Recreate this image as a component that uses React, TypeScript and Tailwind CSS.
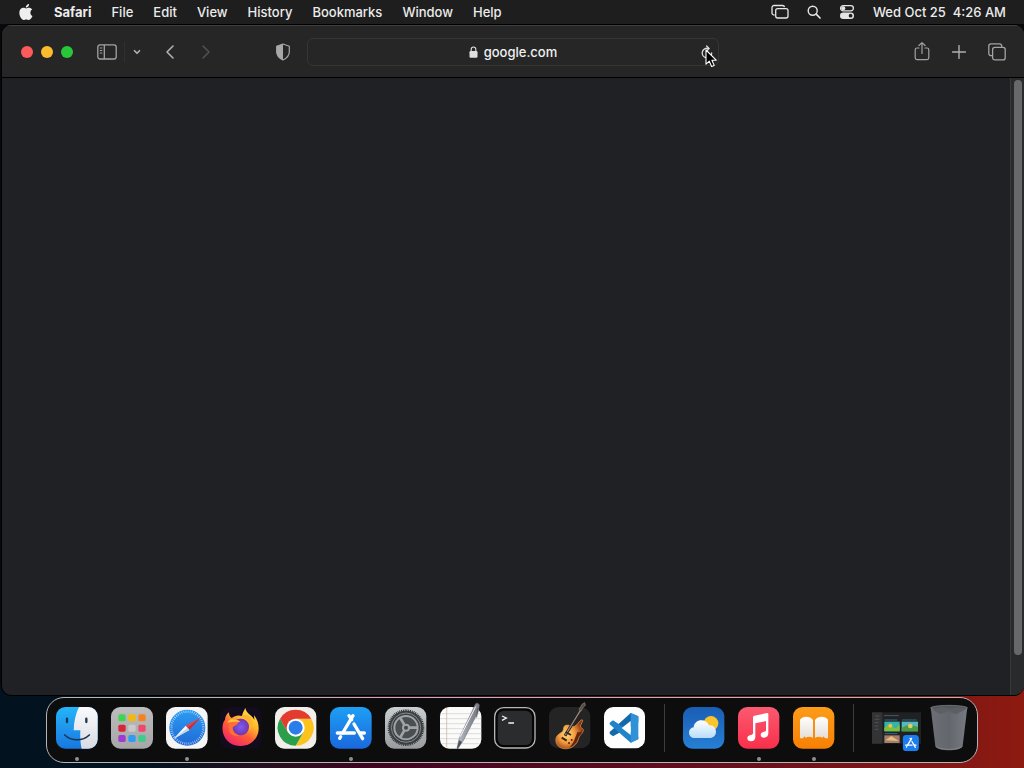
import React from "react";
import clsx from "clsx";
import { ChevronDown, ChevronLeft, ChevronRight, Plus } from "lucide-react";

interface DockApp {
  name: string;
  running?: boolean;
  icon: React.ReactNode;
}

const menus = ["File", "Edit", "View", "History", "Bookmarks", "Window", "Help"];

/* ---------- Menu bar icons ---------- */

const AppleLogo = () => (
  <svg viewBox="0 0 24 24" className="h-4 w-4" fill="#efefef">
    <path d="M12.1 6.7c-.9 0-2.3-1-3.8-1C5 5.8 2 8.3 2 13.2 2 18 5.3 24 8.6 24c1.300 0 2-.9 3.800-.9s2.300.9 3.800.9c2.500 0 4.700-3.600 5.500-6-2-.9-3.100-2.600-3.100-4.900 0-2 1-3.600 2.700-4.700-1.200-1.700-3-2.600-4.900-2.600-1.800 0-3.200.9-4.300.9z" />
    <path d="M16.600 0c.2 3-2 5.500-4.900 5.500C11.400 2.700 13.800.2 16.600 0z" />
  </svg>
);

const MirrorIcon = () => (
  <svg viewBox="0 0 18 16" className="h-4 w-[18px]" fill="none" stroke="#e6e6e6" strokeWidth="1.3">
    <path d="M3.500 11H3a2 2 0 0 1-2-2V3.500a2 2 0 0 1 2-2h8.500a2 2 0 0 1 2 1.700" />
    <rect x="4.7" y="4.6" width="12.3" height="9.4" rx="2" />
  </svg>
);

const SpotlightIcon = () => (
  <svg viewBox="0 0 14 14" className="h-[14px] w-[14px]" fill="none" stroke="#e6e6e6" strokeLinecap="round">
    <circle cx="5.7" cy="5.7" r="4.5" strokeWidth="1.4" />
    <path d="M9.2 9.2 13 13" strokeWidth="1.7" />
  </svg>
);

const ControlCenterIcon = () => (
  <svg viewBox="0 0 16 16" className="h-4 w-4">
    <rect x="1.6" y="1.7" width="12.8" height="5.2" rx="2.6" fill="none" stroke="#e6e6e6" strokeWidth="1.3" />
    <circle cx="4.3" cy="4.3" r="2" fill="#e6e6e6" />
    <rect x="1" y="8.5" width="14" height="6.5" rx="3.2" fill="#e6e6e6" />
    <circle cx="11.6" cy="11.7" r="1.9" fill="#202020" />
  </svg>
);

/* ---------- Safari toolbar icons ---------- */

const SidebarIcon = () => (
  <svg viewBox="0 0 20 16" className="h-4 w-5" fill="none" stroke="#a3a3a3" strokeWidth="1.3">
    <rect x=".8" y=".8" width="18.4" height="14.2" rx="2.2" />
    <path d="M7.300 1v14" />
    <path d="M2.800 4h2.500M2.800 6.500h2.500M2.800 9h2.500" strokeWidth="1" />
  </svg>
);

const ShieldIcon = () => (
  <svg viewBox="0 0 16 18" className="h-[18px] w-4" strokeLinejoin="round">
    <path d="M8 1 14.300 3.300V9c0 3.500-2.300 6-6.300 8-4-2-6.300-4.500-6.300-8V3.300z" fill="none" stroke="#a8a8a8" strokeWidth="1.2" />
    <path d="M8 1v16c-4-2-6.300-4.500-6.300-8V3.300z" fill="#a8a8a8" />
  </svg>
);

const LockIcon = () => (
  <svg viewBox="0 0 9 12" className="h-3 w-[9px]">
    <rect x=".5" y="5" width="8" height="6.8" rx="1.2" fill="#e0e0e0" />
    <path d="M2.200 5.500V3.300a2.300 2.300 0 0 1 4.600 0v2.200" fill="none" stroke="#e0e0e0" strokeWidth="1.1" />
  </svg>
);

const ReloadIcon = () => (
  <svg viewBox="0 0 12 14" className="h-[14px] w-3" fill="none" stroke="#dcdcdc" strokeWidth="1.3" strokeLinecap="round">
    <path d="M7.500 3.400C4 2.700 1.200 5 1.200 8c0 2.600 2.100 4.700 4.800 4.700 2.600 0 4.700-2.100 4.700-4.700" />
    <path d="m5.600 1 2.500 2.500L5.600 6" />
  </svg>
);

const ShareIcon = () => (
  <svg viewBox="0 0 16 20" className="h-5 w-4" fill="none" stroke="#a3a3a3" strokeWidth="1.2" strokeLinecap="round" strokeLinejoin="round">
    <path d="M5 6H3a1.800 1.800 0 0 0-1.800 1.800v8A1.800 1.800 0 0 0 3 17.600h10a1.800 1.800 0 0 0 1.800-1.800v-8A1.800 1.800 0 0 0 13 6h-2" />
    <path d="M8 11.500V.8M4.900 3.500 8 .6l3.100 2.900" />
  </svg>
);

const TabsIcon = () => (
  <svg viewBox="0 0 18 18" className="h-[18px] w-[18px]" fill="none" stroke="#a3a3a3" strokeWidth="1.3">
    <path d="M4.500 12.700H3a2.200 2.200 0 0 1-2.200-2.200V3A2.200 2.200 0 0 1 3 .8h8.500A2.200 2.200 0 0 1 13.700 3v1" />
    <rect x="4.6" y="4.3" width="12.6" height="12.6" rx="2.2" />
  </svg>
);

const Pointer = () => (
  <svg viewBox="0 0 12 19" className="pointer-events-none absolute left-[397px] top-[10px] h-[19px] w-3">
    <path d="M1 1v14.200l3.300-3.100 2.300 5.400 2.600-1.100-2.300-5.200h4.300z" fill="#000" stroke="#fff" strokeWidth="1.1" strokeLinejoin="round" />
  </svg>
);

/* ---------- Dock icons, all drawn on a 126 unit square ---------- */

const Tile = ({ children }: { children: React.ReactNode }) => (
  <svg viewBox="0 0 126 126" className="h-[42px] w-[42px] overflow-visible">
    {children}
  </svg>
);

const Finder = () => (
  <Tile>
    <defs>
      <linearGradient id="finderBlue" x1="0" y1="0" x2="0" y2="1">
        <stop offset="0" stopColor="#25b5f8" />
        <stop offset="1" stopColor="#1877e0" />
      </linearGradient>
      <linearGradient id="finderWhite" x1="0" y1="0" x2="0" y2="1">
        <stop offset="0" stopColor="#fafafc" />
        <stop offset="1" stopColor="#d7dce3" />
      </linearGradient>
      <clipPath id="finderClip">
        <rect width="125" height="125" rx="28" />
      </clipPath>
    </defs>
    <g clipPath="url(#finderClip)">
      <rect width="126" height="126" fill="url(#finderBlue)" />
      <path d="M69 0C59 20 54 43 53 70h20c-1 20 0 38 4 56h49V0z" fill="url(#finderWhite)" />
      <path d="M33 35v10M91 35v10" stroke="#173753" strokeWidth="7" strokeLinecap="round" />
      <path d="M26 84c20 19 54 19 74 0" fill="none" stroke="#173753" strokeWidth="5" strokeLinecap="round" />
    </g>
  </Tile>
);

const padColors = ["#42d353", "#f2b90c", "#f58220", "#d72638", "#c9c9c9", "#f0476e", "#a03ad0", "#2f9cf4", "#3ecb8c"];

const Launchpad = () => (
  <Tile>
    <defs>
      <linearGradient id="padBg" x1="0" y1="0" x2="0" y2="1">
        <stop offset="0" stopColor="#bdbdbd" />
        <stop offset="1" stopColor="#a6a6a8" />
      </linearGradient>
    </defs>
    <rect width="126" height="125" rx="28" fill="url(#padBg)" />
    {padColors.map((color, i) => (
      <rect key={color} x={22 + (i % 3) * 30} y={22 + Math.floor(i / 3) * 31} width="22" height="21" rx="5" fill={color} />
    ))}
  </Tile>
);

const SafariIcon = () => (
  <Tile>
    <defs>
      <linearGradient id="safariBlue" x1="0" y1="0" x2="0" y2="1">
        <stop offset="0" stopColor="#2c9df2" />
        <stop offset="1" stopColor="#2069d5" />
      </linearGradient>
    </defs>
    <rect width="125" height="125" rx="28" fill="#f5f5f6" />
    <circle cx="64" cy="62" r="54" fill="url(#safariBlue)" />
    <circle cx="64" cy="62" r="48" fill="none" stroke="#d8ecff" strokeWidth="7" strokeDasharray="1.8 4.48" />
    <path d="M103 32 59 56l11 13z" fill="#e8434b" />
    <path d="M103 32 65 62l5 7z" fill="#c02e3c" />
    <path d="m22 96 37-40 11 13z" fill="#f7f9fb" />
    <path d="m22 96 43-34 5 7z" fill="#c7d6e4" />
  </Tile>
);

const Firefox = () => (
  <Tile>
    <defs>
      <linearGradient id="foxFire" x1=".85" y1="0" x2=".2" y2="1">
        <stop offset="0" stopColor="#fff04a" />
        <stop offset=".35" stopColor="#ffb52c" />
        <stop offset=".62" stopColor="#ff5b35" />
        <stop offset="1" stopColor="#ed1f73" />
      </linearGradient>
      <radialGradient id="foxGlobe">
        <stop offset="0" stopColor="#7b5cf5" />
        <stop offset="1" stopColor="#7435ad" />
      </radialGradient>
    </defs>
    <rect width="125" height="125" rx="28" fill="#130b1e" />
    <path d="M76 3c-4 9-9 15-10 24-12-4-22-1-31 6-7-4-8-11-8-17-8 5-12 15-12 22-8 10-9 25-6 39 6 26 29 40 53 40 32 0 54-25 54-52 0-16-4-28-14-40l1 14C98 26 79 20 76 3z" fill="url(#foxFire)" />
    <circle cx="62" cy="60" r="25" fill="url(#foxGlobe)" />
    <path d="M34 40c12-7 20-1 27 4-5 1-9 4-9 8-6 5-14 6-14 12 0 10 9 18 20 22-16 4-29-4-31-17-2-11 0-22 7-29z" fill="#ff6f34" />
    <path d="M35 37c-5 0-10 4-13 10 10-4 26-3 39-3-8-5-16-9-26-7z" fill="#ffc13b" />
    <path d="M81 38c9 10 11 24 3 37 15-14 17-27 10-41-5-9-15-13-28-7z" fill="#ffb42d" />
  </Tile>
);

const Chrome = () => (
  <Tile>
    <rect width="124" height="125" rx="28" fill="#f1efec" />
    <path d="M62 35h46.800A54 54 0 0 1 62 116l23.400-40.500z" fill="#fcc31e" />
    <path d="M85.400 75.500 62 116A54 54 0 0 1 15.200 35l23.400 40.500z" fill="#2b9e4b" />
    <path d="M62 35h46.800A54 54 0 0 0 15.200 35l23.400 40.500z" fill="#e33b2e" />
    <circle cx="62" cy="62" r="27" fill="#fff" />
    <circle cx="62" cy="62" r="21" fill="#2b7de9" />
  </Tile>
);

const AppStoreGlyph = () => (
  <g fill="none" stroke="#fff" strokeWidth="10" strokeLinecap="round">
    <path d="M57 26 65 38M72 51l26 44" />
    <path d="M69 26 38 78" />
    <path d="M22 78h51M91 78h12" />
    <path d="m32 89-3 5" />
  </g>
);

const AppStore = () => (
  <Tile>
    <defs>
      <linearGradient id="storeBlue" x1="0" y1="0" x2="0" y2="1">
        <stop offset="0" stopColor="#1e9ff4" />
        <stop offset="1" stopColor="#1a68dd" />
      </linearGradient>
    </defs>
    <rect width="125" height="125" rx="28" fill="url(#storeBlue)" />
    <AppStoreGlyph />
  </Tile>
);

const Settings = () => (
  <Tile>
    <defs>
      <linearGradient id="gearBg" x1="0" y1="0" x2="0" y2="1">
        <stop offset="0" stopColor="#c9ced0" />
        <stop offset="1" stopColor="#989c9f" />
      </linearGradient>
    </defs>
    <rect width="124" height="125" rx="28" fill="url(#gearBg)" />
    <circle cx="63" cy="62" r="51" fill="#3d4043" />
    <circle cx="63" cy="62" r="52" fill="none" stroke="#333639" strokeWidth="6" strokeDasharray="3 2.44" />
    <circle cx="63" cy="62" r="44" fill="none" stroke="#85898b" strokeWidth="3" />
    <circle cx="63" cy="62" r="33" fill="#4b4e51" />
    <circle cx="63" cy="62" r="35" fill="none" stroke="#a1a4a6" strokeWidth="6" />
    <path d="M63 62h33M63 62 46 33M63 62 46 91" stroke="#a1a4a6" strokeWidth="8" />
    <circle cx="63" cy="62" r="12" fill="#a1a4a6" />
    <circle cx="63" cy="62" r="6" fill="#45484b" />
  </Tile>
);

const TextEdit = () => (
  <Tile>
    <defs>
      <linearGradient id="penBody" x1="0" y1="0" x2="1" y2=".3">
        <stop offset="0" stopColor="#dfe2e6" />
        <stop offset=".5" stopColor="#9ea2aa" />
        <stop offset="1" stopColor="#6b6e76" />
      </linearGradient>
    </defs>
    <rect width="124" height="125" rx="28" fill="#fbfbfa" />
    <path d="M5 20h114M0 35h124M0 50h124M0 65h124M0 80h124M0 95h124M6 110h112" stroke="#cdcdce" strokeWidth="2" />
    <path d="M20 3v118" stroke="#c5aaa0" strokeWidth="2" />
    <path d="M106-8c2-5 11-4 12 3l-3 19-45 87-17 25-2-2 7-32z" fill="url(#penBody)" stroke="#72757d" strokeWidth="1.5" />
    <path d="m107-1-46 90" stroke="#f3f4f5" strokeWidth="3" />
    <path d="m113 4-3 26" stroke="#5b5e67" strokeWidth="3" strokeLinecap="round" />
    <path d="m57 100 9 5-13 21-2-2z" fill="#4e5159" />
  </Tile>
);

const Terminal = () => (
  <Tile>
    <rect x="2" y="2" width="121" height="121" rx="27" fill="#050505" stroke="#b7b7b7" strokeWidth="4" />
    <rect x="11" y="11" width="103" height="103" rx="19" fill="#2b2c2d" />
    <path d="m24 27 13 6-13 7M43 48h17" fill="none" stroke="#f4f4f4" strokeWidth="4" />
  </Tile>
);

const GarageBand = () => (
  <Tile>
    <defs>
      <radialGradient id="guitar" cx=".4" cy=".5" r=".6">
        <stop offset="0" stopColor="#ffe27a" />
        <stop offset=".5" stopColor="#f49a3c" />
        <stop offset="1" stopColor="#8a3212" />
      </radialGradient>
    </defs>
    <rect width="124" height="124" rx="28" fill="#242425" />
    <path d="M50 55c-8 2-5 12-9 18-4 5-12 7-17 14-7 11-3 26 7 33 12 8 31 7 43-3 9-7 13-15 15-24 3-10 13-13 14-23 0-6-5-6-8-9-3-5 5-13 6-20 0-4-3-3-6-1-7 6-10 14-18 18-9 2-15-6-27-3z" fill="url(#guitar)" stroke="#e9a052" strokeWidth="2" />
    <path d="M86 74c5 4 11 1 14-4 1 11-9 14-12 23-3 12-13 25-27 29 14-14 17-31 25-48z" fill="#642510" />
    <path d="m48 86 47-77" stroke="#2b211b" strokeWidth="9" />
    <path d="m49 84 46-75" stroke="#9a8c80" strokeWidth="4" />
    <path d="m90 8 9-16 8-5 2 8-8 8-5 10z" fill="#514a47" stroke="#948b82" strokeWidth="2" />
    <path d="m50 75 16 9M38 92l15 9" stroke="#3a2319" strokeWidth="6" />
    <circle cx="68" cy="99" r="3" fill="#4b2714" />
    <circle cx="60" cy="108" r="3" fill="#4b2714" />
  </Tile>
);

const VSCode = () => (
  <Tile>
    <rect width="123" height="124" rx="28" fill="#fefefe" />
    <path d="m80 18 23 10v18L27 88l-10-8v-5z" fill="#1469aa" />
    <path d="m17 47 10-7 76 50v6l-23 11-63-55z" fill="#1f83c9" />
    <path d="m80 18 23 10v69l-23 10z" fill="#3090d8" />
    <path d="M80 42v42L53 63z" fill="#fefefe" />
  </Tile>
);

const Weather = () => (
  <Tile>
    <defs>
      <linearGradient id="sky" x1="0" y1="0" x2="0" y2="1">
        <stop offset="0" stopColor="#1a5db4" />
        <stop offset="1" stopColor="#2680d5" />
      </linearGradient>
      <linearGradient id="cloud" x1="0" y1="0" x2="0" y2="1">
        <stop offset="0" stopColor="#fff" />
        <stop offset="1" stopColor="#b9dcfa" />
      </linearGradient>
    </defs>
    <rect width="124" height="125" rx="28" fill="url(#sky)" />
    <circle cx="84" cy="49" r="22" fill="#fac52b" />
    <path d="M36 93c-11 0-18-7-18-16s6-15 14-16c1-13 11-21 23-21 11 0 19 6 23 15 11-2 21 7 21 19 0 11-8 19-19 19z" fill="url(#cloud)" />
  </Tile>
);

const Music = () => (
  <Tile>
    <defs>
      <linearGradient id="musicRed" x1="0" y1="0" x2="0" y2="1">
        <stop offset="0" stopColor="#fb5a70" />
        <stop offset="1" stopColor="#f92f4b" />
      </linearGradient>
    </defs>
    <rect width="124" height="125" rx="28" fill="url(#musicRed)" />
    <path d="M45 31q0-4 4-5l38-8q4-1 4 3v58c0 8-5 13-13 13-6 0-10-3-10-8 0-6 4-9 10-10 5-1 6-2 6-6V42l-32 7v41c0 8-5 13-13 13-7 0-11-4-11-9 0-6 4-9 10-10 5-1 7-2 7-6z" fill="#fff" />
  </Tile>
);

const Books = () => (
  <Tile>
    <defs>
      <linearGradient id="bookOrange" x1="0" y1="0" x2="0" y2="1">
        <stop offset="0" stopColor="#fc9c18" />
        <stop offset="1" stopColor="#f78005" />
      </linearGradient>
      <linearGradient id="page" x1="0" y1="0" x2="0" y2="1">
        <stop offset="0" stopColor="#fff" />
        <stop offset="1" stopColor="#e5ded6" />
      </linearGradient>
    </defs>
    <rect width="124" height="125" rx="28" fill="url(#bookOrange)" />
    <path d="M60 39c-7-12-31-14-39-1v56h9l4-6 4 4c8-4 16-3 22 1zM66 39c7-12 31-14 39-1v56h-9l-4-6-4 4c-8-4-16-3-22 1z" fill="url(#page)" />
  </Tile>
);

const MinimizedWindow = () => (
  <svg viewBox="0 0 147 126" className="h-[42px] w-[49px] overflow-visible">
    <rect y="16" width="147" height="94" fill="#202123" />
    <rect y="16" width="31" height="94" fill="#333436" />
    <path d="M10 27h12M8 37h14M8 47h12M8 57h10M8 67h12" stroke="#515355" strokeWidth="3" />
    <path d="M36 26h44" stroke="#55575a" strokeWidth="3" />
    <path d="M38 39h38M90 39h44M38 80h38" stroke="#2b6f90" strokeWidth="3" />
    <rect x="37" y="44" width="46" height="29" fill="#36b4ac" />
    <path d="M37 63q15-16 25-4t21-8v22H37z" fill="#82bd3c" />
    <circle cx="55" cy="56" r="6" fill="#e6c749" />
    <rect x="89" y="44" width="49" height="29" fill="#54b9c5" />
    <path d="M89 63q20-16 49-3v13H89z" fill="#4d9b41" />
    <circle cx="115" cy="57" r="7" fill="#e1ce67" />
    <rect x="37" y="85" width="46" height="23" fill="#a67d6f" />
    <path d="m40 100 18-13 22 15" fill="#e3c079" />
    <svg x="92" y="84" width="49" height="49" viewBox="0 0 126 126">
      <rect width="125" height="125" rx="28" fill="#1c7dee" />
      <AppStoreGlyph />
    </svg>
  </svg>
);

const Trash = () => (
  <svg viewBox="0 0 114 126" className="h-[42px] w-[38px] overflow-visible">
    <defs>
      <linearGradient id="bin" x1="0" y1="0" x2="1" y2="0">
        <stop offset="0" stopColor="#6c7075" />
        <stop offset=".5" stopColor="#63676d" />
        <stop offset="1" stopColor="#777a80" />
      </linearGradient>
    </defs>
    <path d="M2 1 16 117c3 17 79 17 82 0L112 1z" fill="url(#bin)" />
    <ellipse cx="57" cy="3" rx="55" ry="8" fill="#54585d" stroke="#7f8286" strokeWidth="2" />
    <path d="m6 8 25 13 25-8 22 9 30-15-22-6-26 4-22-5z" fill="#5c6065" />
    <path d="M17 118c10 12 70 12 80 0" fill="none" stroke="#8f9296" strokeWidth="2" />
  </svg>
);

const mainApps: DockApp[] = [
  { name: "Finder", running: true, icon: <Finder /> },
  { name: "Launchpad", icon: <Launchpad /> },
  { name: "Safari", running: true, icon: <SafariIcon /> },
  { name: "Firefox", icon: <Firefox /> },
  { name: "Chrome", icon: <Chrome /> },
  { name: "App Store", running: true, icon: <AppStore /> },
  { name: "System Settings", icon: <Settings /> },
  { name: "TextEdit", icon: <TextEdit /> },
  { name: "Terminal", icon: <Terminal /> },
  { name: "GarageBand", icon: <GarageBand /> },
  { name: "Visual Studio Code", icon: <VSCode /> },
];

const recentApps: DockApp[] = [
  { name: "Weather", icon: <Weather /> },
  { name: "Music", running: true, icon: <Music /> },
  { name: "Books", running: true, icon: <Books /> },
];

const DockItem = ({ app }: { app: DockApp }) => (
  <button aria-label={app.name} className="relative">
    {app.icon}
    {app.running && (
      <span className="absolute -bottom-3 left-1/2 h-1 w-1 -translate-x-1/2 rounded-full bg-[#8f8f8f]" />
    )}
  </button>
);

const Divider = () => <span className="h-12 w-px bg-[#3d3d3d]" />;

function MenuBar() {
  return (
    <header className="flex h-6 items-center justify-between bg-[#1e1e1e] pb-px pl-[18px] pr-[18px] text-[13px] font-medium leading-4 text-[#ececec]">
      <nav className="flex items-center gap-5">
        <button aria-label="Apple menu">
          <AppleLogo />
        </button>
        <button className="font-bold">Safari</button>
        {menus.map((menu) => (
          <button key={menu}>{menu}</button>
        ))}
      </nav>
      <div className="flex items-center gap-[18px]">
        <button aria-label="Screen Mirroring">
          <MirrorIcon />
        </button>
        <button aria-label="Spotlight">
          <SpotlightIcon />
        </button>
        <button aria-label="Control Center">
          <ControlCenterIcon />
        </button>
        <button className="whitespace-pre">{"Wed Oct 25  4:26 AM"}</button>
      </div>
    </header>
  );
}

function Toolbar() {
  const lights = [
    { name: "Close", color: "bg-[#fc5b5c]" },
    { name: "Minimize", color: "bg-[#fdbb2e]" },
    { name: "Zoom", color: "bg-[#27c93a]" },
  ];

  return (
    <div className="grid h-[53px] grid-cols-[1fr_412px_1fr] items-center border-t border-b border-t-[#3f3f3f] border-b-black bg-[#262626] text-[#b0b0b0]">
      <div className="flex items-center justify-between pl-[19px] pr-4">
        <div className="flex items-center gap-6">
          <div className="flex gap-2">
            {lights.map((light) => (
              <button key={light.name} aria-label={light.name} className={clsx("h-3 w-3 rounded-full", light.color)} />
            ))}
          </div>
          <div className="flex items-center gap-4">
            <div className="flex items-center gap-[7px]">
              <button aria-label="Show sidebar">
                <SidebarIcon />
              </button>
              <span className="h-5 w-px bg-[#303030]" />
              <button aria-label="Tab groups">
                <ChevronDown className="h-[10px] w-[10px]" strokeWidth={4} />
              </button>
            </div>
            <div className="flex items-center gap-3">
              <button aria-label="Back">
                <ChevronLeft className="h-6 w-6" strokeWidth={1.6} />
              </button>
              <button aria-label="Forward" disabled className="text-[#505050]">
                <ChevronRight className="h-6 w-6" strokeWidth={1.6} />
              </button>
            </div>
          </div>
        </div>
        <button aria-label="Privacy report">
          <ShieldIcon />
        </button>
      </div>

      <div className="relative grid h-7 grid-cols-[1fr_auto_1fr] items-center rounded-md border border-[#363636]">
        <span />
        <label className="flex items-center gap-[6px]">
          <LockIcon />
          <input
            aria-label="Address"
            defaultValue="google.com"
            className="field-sizing-content bg-transparent text-[13px] font-medium leading-4 text-[#f0f0f0] outline-none"
          />
        </label>
        <button aria-label="Reload" className="mr-[5px] justify-self-end">
          <ReloadIcon />
        </button>
        <Pointer />
      </div>

      <div className="flex items-center justify-end gap-[18px] pr-[18px]">
        <button aria-label="Share">
          <ShareIcon />
        </button>
        <button aria-label="New tab">
          <Plus className="h-[22px] w-[22px]" strokeWidth={1.5} />
        </button>
        <button aria-label="Tab overview">
          <TabsIcon />
        </button>
      </div>
    </div>
  );
}

export default function App() {
  return (
    <div className="flex min-h-screen flex-col bg-[#06090d] font-[Inter,sans-serif] select-none">
      <MenuBar />
      <main className="relative z-10 ml-px flex flex-1 flex-col overflow-hidden rounded-[10px] border border-r-0 border-black bg-[#202124]">
        <Toolbar />
        <div className="flex flex-1">
          <div className="flex-1" />
          <div className="flex w-[14px] flex-col border-l border-[#38393a] bg-[#292a2c] pb-10 pl-[3px] pr-[2px] pt-[2px]">
            <div className="flex-1 rounded-full bg-[#66686a]" />
          </div>
        </div>
      </main>

      {/* the wallpaper runs up behind the rounded bottom corners of the window */}
      <footer className="-mt-3 flex justify-center bg-linear-to-r from-[#03121f] from-15% via-[#3c0420] via-35% to-[#8c1a10] pb-[5px] pt-[13px]">
        <div className="flex h-[66px] items-center gap-[18px] rounded-[18px] border border-[#b5b5b5] bg-[#0d0d0e] px-[9px] pb-[5px]">
          <div className="flex w-[590px] justify-between">
            {mainApps.map((app) => (
              <DockItem key={app.name} app={app} />
            ))}
          </div>
          <Divider />
          <div className="flex w-[152px] justify-between">
            {recentApps.map((app) => (
              <DockItem key={app.name} app={app} />
            ))}
          </div>
          <Divider />
          <div className="flex gap-[9px]">
            <button aria-label="App Store window">
              <MinimizedWindow />
            </button>
            <button aria-label="Trash">
              <Trash />
            </button>
          </div>
        </div>
      </footer>
    </div>
  );
}
